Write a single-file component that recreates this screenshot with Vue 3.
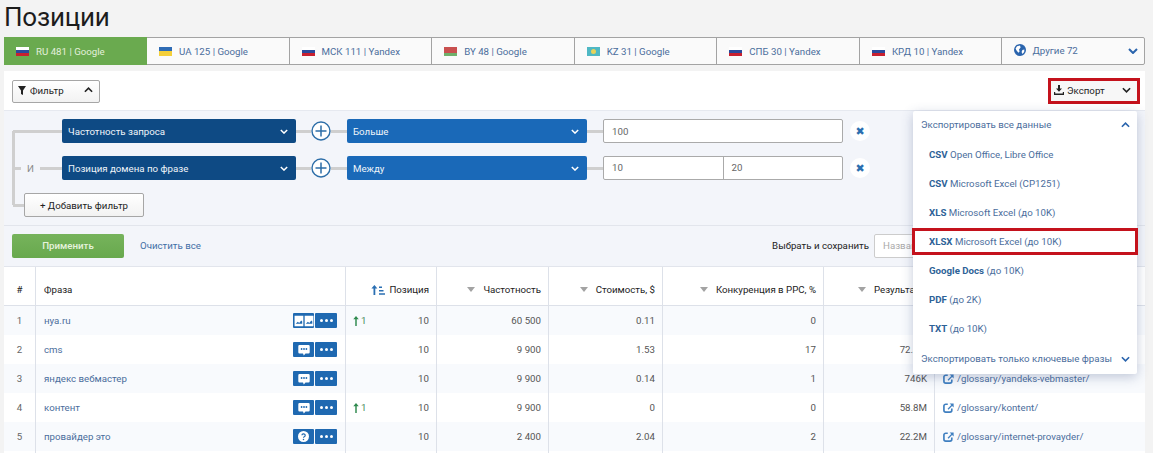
<script setup>
const tabs = [
  { label: 'RU 481 | Google', flag: ['#fff', '#2b4a9b', '#c8202f'], active: true },
  { label: 'UA 125 | Google', flag: ['#2f6cb5', '#f4cf3a'] },
  { label: 'МСК 111 | Yandex', flag: ['#fff', '#2b4a9b', '#c8202f'] },
  { label: 'BY 48 | Google', flag: ['#c9504f', '#c9504f', '#6fb06b'] },
  { label: 'KZ 31 | Google', flag: ['#4fb8c4'], sun: true },
  { label: 'СПБ 30 | Yandex', flag: ['#fff', '#2b4a9b', '#c8202f'] },
  { label: 'КРД 10 | Yandex', flag: ['#fff', '#2b4a9b', '#c8202f'] }
]
const columns = [
  { label: '#', cls: 'center' },
  { label: 'Фраза', cls: 'left' },
  { label: 'Позиция', sort: true },
  { label: 'Частотность', caret: true },
  { label: 'Стоимость, $', caret: true },
  { label: 'Конкуренция в PPC, %', caret: true },
  { label: 'Результаты', caret: true },
  { label: '', cls: 'left' }
]
const rows = [
  { n: 1, phrase: 'нуа.ru', icon: 'images', up: true, freq: '60 500', cost: '0.11', comp: '0', res: '14', url: '/' },
  { n: 2, phrase: 'cms', icon: 'chat', up: false, freq: '9 900', cost: '1.53', comp: '17', res: '72.4M', url: '/glossary/cms/' },
  { n: 3, phrase: 'яндекс вебмастер', icon: 'chat', up: false, freq: '9 900', cost: '0.14', comp: '1', res: '746K', url: '/glossary/yandeks-vebmaster/' },
  { n: 4, phrase: 'контент', icon: 'chat', up: true, freq: '9 900', cost: '0', comp: '0', res: '58.8M', url: '/glossary/kontent/' },
  { n: 5, phrase: 'провайдер это', icon: 'help', up: false, freq: '2 400', cost: '2.04', comp: '2', res: '22.2M', url: '/glossary/internet-provayder/' }
]
const exports_ = [
  { b: 'CSV', t: 'Open Office, Libre Office' },
  { b: 'CSV', t: 'Microsoft Excel (CP1251)' },
  { b: 'XLS', t: 'Microsoft Excel (до 10K)' },
  { b: 'XLSX', t: 'Microsoft Excel (до 10K)', mark: true },
  { b: 'Google Docs', t: '(до 10K)' },
  { b: 'PDF', t: '(до 2K)' },
  { b: 'TXT', t: '(до 10K)' }
]
</script>

<template>
  <div class="page">
    <h1 class="title">Позиции</h1>

    <nav class="tabs">
      <div v-for="tab in tabs" :key="tab.label" class="tab" :class="{ active: tab.active }">
        <span class="flag">
          <i v-for="(c, i) in tab.flag" :key="i" :style="{ background: c }"></i>
          <b v-if="tab.sun" class="sun"></b>
        </span>
        <span>{{ tab.label }}</span>
      </div>
      <div class="tab tab-more">
        <svg class="globe" viewBox="0 0 12 12" width="12" height="12">
          <circle cx="6" cy="6" r="6" fill="#2a64ad" />
          <path d="M3 2.2 6 1.6 6.6 3.6 5 5.4 5.6 7.6 4.4 8.8 2.4 6.2 1.6 4.4Z" fill="#fff" />
          <path d="M8.4 6 10.4 5.4 10.2 8 8.4 10 7.6 8Z" fill="#fff" />
        </svg>
        <span>Другие 72</span>
        <svg class="more-chev" viewBox="0 0 10 6" width="10" height="6">
          <path d="M1 1l4 4 4-4" fill="none" stroke="#2a64ad" stroke-width="2" />
        </svg>
      </div>
    </nav>

    <section class="card">
      <div class="toolbar">
        <button class="btn filter-btn">
          <svg viewBox="0 0 8 9" width="8" height="9"><path d="M0 0h8L5 4.500V9L3 8V4.500Z" fill="#222" /></svg>
          <span>Фильтр</span>
          <svg class="chev" viewBox="0 0 10 6" width="9" height="6"><path d="M1 5l4-4 4 4" fill="none" stroke="#222" stroke-width="1.8" /></svg>
        </button>
        <div class="export-box">
          <svg viewBox="0 0 10 10" width="10" height="10">
            <path d="M4 0h2v3.6h2L5 6.8 2 3.6h2Z M0 7h1.2v1.6h7.6V7H10v3H0Z" fill="#222" />
          </svg>
          <span>Экспорт</span>
          <svg class="chev" viewBox="0 0 10 6" width="9" height="6"><path d="M1 1l4 4 4-4" fill="none" stroke="#222" stroke-width="1.8" /></svg>
        </div>
      </div>

      <div class="filters">
        <span class="tree-line"></span>
        <div class="f-row">
          <span class="join"><i class="dash long"></i></span>
          <div class="select dark"><span>Частотность запроса</span><svg viewBox="0 0 10 6" width="8" height="5"><path d="M1 1l4 4 4-4" fill="none" stroke="#fff" stroke-width="1.8" /></svg></div>
          <i class="dash s15"></i>
          <svg class="plus" viewBox="0 0 20 20" width="20" height="20"><circle cx="10" cy="10" r="9" fill="#fff" stroke="#2d6ea8" stroke-width="1.4" /><path d="M10 4.500v11M4.500 10h11" stroke="#2d6ea8" stroke-width="1.5" /></svg>
          <i class="dash s16"></i>
          <div class="select blue"><span>Больше</span><svg viewBox="0 0 10 6" width="8" height="5"><path d="M1 1l4 4 4-4" fill="none" stroke="#fff" stroke-width="1.8" /></svg></div>
          <i class="dash s16"></i>
          <div class="input"><span>100</span></div>
          <span class="remove">✖</span>
        </div>
        <div class="f-row">
          <span class="join"><i class="dash d1"></i><span class="and">И</span><i class="dash d2"></i></span>
          <div class="select dark"><span>Позиция домена по фразе</span><svg viewBox="0 0 10 6" width="8" height="5"><path d="M1 1l4 4 4-4" fill="none" stroke="#fff" stroke-width="1.8" /></svg></div>
          <i class="dash s15"></i>
          <svg class="plus" viewBox="0 0 20 20" width="20" height="20"><circle cx="10" cy="10" r="9" fill="#fff" stroke="#2d6ea8" stroke-width="1.4" /><path d="M10 4.500v11M4.500 10h11" stroke="#2d6ea8" stroke-width="1.5" /></svg>
          <i class="dash s16"></i>
          <div class="select blue"><span>Между</span><svg viewBox="0 0 10 6" width="8" height="5"><path d="M1 1l4 4 4-4" fill="none" stroke="#fff" stroke-width="1.8" /></svg></div>
          <i class="dash s16"></i>
          <div class="input split"><span>10</span><span>20</span></div>
          <span class="remove">✖</span>
        </div>
        <div class="f-row add-row">
          <i class="dash s11"></i>
          <button class="btn add-btn">+ Добавить фильтр</button>
        </div>
      </div>

      <div class="apply">
        <button class="apply-btn">Применить</button>
        <a class="clear">Очистить все</a>
        <span class="save-label">Выбрать и сохранить</span>
        <div class="save-input">Название</div>
      </div>

      <div class="table">
        <div class="row head">
          <div v-for="c in columns" :key="c.label" class="cell" :class="c.cls">
            <svg v-if="c.sort" class="sort" viewBox="0 0 14 10" width="14" height="10">
              <path d="M2.500 10V3.400H.4L3.400 0l3 3.400H4.300V10Z" fill="#2a6fb3" />
              <path d="M8 1.600h3v1.500H8zM8 5h4.500v1.500H8zM8 8.300h6v1.500H8z" fill="#2a6fb3" />
            </svg>
            <span v-if="c.caret" class="caret"></span>
            <span>{{ c.label }}</span>
          </div>
        </div>
        <div v-for="r in rows" :key="r.n" class="row body">
          <div class="cell center num">{{ r.n }}</div>
          <div class="cell left phrase">
            <a>{{ r.phrase }}</a>
            <span class="actions">
              <span class="act">
                <svg v-if="r.icon === 'images'" viewBox="0 0 21 12" width="20" height="12">
                  <path d="M.6.6h9.200v10.800H.6ZM11.200.6h9.200v10.800h-9.200Z" fill="#fff" />
                  <path d="M1.800 8.800 4 6.800l1.400 1.200L7.600 5.400l1 1v2.400ZM12.400 8.800l2.200-2 1.400 1.200 2.200-2.600 1 1v2.400Z" fill="#1f69b1" />
                </svg>
                <svg v-else-if="r.icon === 'chat'" viewBox="0 0 12 12" width="12" height="12">
                  <path d="M1.500 1h9A1.200 1.200 0 0 1 11.700 2.200v6A1.200 1.200 0 0 1 10.500 9.400H7.500L5.800 11.500 5 9.400H1.500A1.200 1.200 0 0 1 .3 8.200v-6A1.200 1.200 0 0 1 1.500 1Z" fill="#fff" />
                  <circle cx="3.600" cy="5" r=".9" fill="#1f69b1" /><circle cx="6" cy="5" r=".9" fill="#1f69b1" /><circle cx="8.400" cy="5" r=".9" fill="#1f69b1" />
                </svg>
                <svg v-else viewBox="0 0 12 12" width="11" height="11">
                  <circle cx="6" cy="6" r="6" fill="#fff" />
                  <path d="M4.300 4.700A1.800 1.600 0 1 1 6.800 6.200C6.200 6.500 6 6.800 6 7.400" fill="none" stroke="#1f69b1" stroke-width="1.300" />
                  <circle cx="6" cy="9.200" r=".85" fill="#1f69b1" />
                </svg>
              </span>
              <span class="act dots"><i></i><i></i><i></i></span>
            </span>
          </div>
          <div class="cell pos">
            <span v-if="r.up" class="up">
              <svg viewBox="0 0 6 11" width="6" height="10"><path d="M3 0l3 3.600H3.800V11H2.200V3.600H0Z" fill="#2f8a4e" /></svg>1
            </span>
            <span class="pos-val">10</span>
          </div>
          <div class="cell">{{ r.freq }}</div>
          <div class="cell">{{ r.cost }}</div>
          <div class="cell">{{ r.comp }}</div>
          <div class="cell">{{ r.res }}</div>
          <div class="cell left url">
            <svg viewBox="0 0 12 12" width="11" height="11">
              <path d="M5.200 2.400H3A2 2 0 0 0 1 4.400V9a2 2 0 0 0 2 2h4.600a2 2 0 0 0 2-2V7" fill="none" stroke="#3f7fc0" stroke-width="1.800" />
              <path d="M5 7.400 9 3.400 7.200 1.600H11.600V6L9.900 4.300 6 8.400Z" fill="#3f7fc0" />
            </svg>
            <a>{{ r.url }}</a>
          </div>
        </div>
        <div class="row tail">
          <div v-for="i in 8" :key="i" class="cell"></div>
        </div>
      </div>

      <aside class="dropdown">
        <div class="dd-head first">
          <span>Экспортировать все данные</span>
          <svg viewBox="0 0 10 6" width="9" height="6"><path d="M1 5l4-4 4 4" fill="none" stroke="#2a64ad" stroke-width="1.800" /></svg>
        </div>
        <div v-for="e in exports_" :key="e.b + e.t" class="dd-item" :class="{ mark: e.mark }">
          <b>{{ e.b }}</b> {{ e.t }}
        </div>
        <div class="dd-head last">
          <span>Экспортировать только ключевые фразы</span>
          <svg viewBox="0 0 10 6" width="9" height="6"><path d="M1 1l4 4 4-4" fill="none" stroke="#2a64ad" stroke-width="1.800" /></svg>
        </div>
      </aside>
    </section>
  </div>
</template>

<style scoped>
.page {
  height: 453px;
  overflow: hidden;
  padding: 0 8px 0 4px;
  box-sizing: border-box;
  font-family: Roboto, "Liberation Sans", sans-serif;
  font-size: 9.7px;
  color: #555;
}
.title {
  margin: 0;
  height: 37px;
  font-size: 26px;
  letter-spacing: -0.2px;
  line-height: 34px;
  font-weight: 400;
  color: #1c1c1c;
}
.tabs {
  display: flex;
  height: 28px;
  box-sizing: border-box;
  border: 1px solid #a3a3a3;
  border-radius: 2px;
  background: #fafafa;
}
.tab {
  flex: 1 1 0;
  display: flex;
  align-items: center;
  gap: 7px;
  padding-left: 12px;
  border-right: 1px solid #a3a3a3;
  color: #4a6d9c;
}
.tab.active {
  flex: none;
  box-sizing: border-box;
  width: 143px;
  margin: -1px 0 -1px -1px;
  background: #6aaa4f;
  color: #e4f0dc;
  border-right: 0;
}
.flag {
  position: relative;
  display: flex;
  flex-direction: column;
  width: 13px;
  height: 9px;
  overflow: hidden;
}
.flag i { flex: 1; }
.sun {
  position: absolute;
  left: 4px;
  top: 2px;
  width: 5px;
  height: 5px;
  border-radius: 50%;
  background: #e6d35a;
}
.tab-more { position: relative; border-right: 0; gap: 6px; padding-bottom: 2px; }
.more-chev { position: absolute; right: 6px; top: 10px; }
.card {
  position: relative;
  margin-top: 6px;
  background: #fff;
  height: 382px;
}
.toolbar {
  display: flex;
  align-items: center;
  justify-content: space-between;
  height: 39px;
  padding: 0 5px 0 8px;
  box-sizing: border-box;
}
.btn {
  font: inherit;
  color: #222;
  background: linear-gradient(#fff, #f2f2f2);
  border: 1px solid #a6a6a6;
  border-radius: 2px;
  padding: 0;
}
.filter-btn {
  display: flex;
  align-items: center;
  gap: 4px;
  width: 88px;
  height: 23px;
  margin-top: 1px;
  padding: 0 0 2px 5px;
  box-sizing: border-box;
}
.filter-btn .chev { margin-left: auto; margin-right: 6px; }
.export-box {
  display: flex;
  align-items: center;
  gap: 3px;
  width: 92px;
  height: 26px;
  box-sizing: border-box;
  border: 3px solid #c4121c;
  background: #f7f7f7;
  padding: 0 0 1px 3px;
  color: #222;
}
.export-box .chev { margin-left: auto; margin-right: 6px; }
.filters {
  position: relative;
  display: flex;
  flex-direction: column;
  gap: 13px;
  height: 116px;
  padding-top: 8px;
  box-sizing: border-box;
  background: #f3f5fa;
  border-top: 1px solid #e6e9f0;
  border-bottom: 1px solid #e2e5ec;
}
.tree-line {
  position: absolute;
  left: 8px;
  top: 20px;
  width: 3px;
  height: 74px;
  background: #cfcfcf;
}
.f-row { display: flex; align-items: center; height: 24px; }
.join { display: flex; align-items: center; width: 58px; flex: none; position: relative; height: 100%; }
.dash { display: block; height: 3px; background: #cfcfcf; flex: none; }
.dash.long { width: 49px; margin-left: 9px; }
.dash.d1 { width: 6px; margin-left: 11px; }
.and { width: 19px; text-align: center; color: #8a8a8a; flex: none; }
.dash.d2 { width: 22px; }
.dash.s15 { width: 15px; }
.dash.s16 { width: 16px; }
.dash.s11 { width: 11px; margin-left: 9px; }
.select {
  display: flex;
  align-items: center;
  justify-content: space-between;
  height: 24px;
  box-sizing: border-box;
  padding: 0 8px 0 6px;
  border-radius: 2px;
  color: #f0f5fa;
  flex: none;
}
.select.dark { width: 234px; background: #0e4a84; }
.select.blue { width: 240px; background: #1a69b8; }
.plus { flex: none; }
.input {
  display: flex;
  align-items: center;
  width: 240px;
  height: 24px;
  box-sizing: border-box;
  border: 1px solid #aaa;
  border-radius: 2px;
  background: #fff;
  flex: none;
  color: #666;
}
.input span { padding-left: 8px; }
.input.split span { flex: 1; height: 100%; line-height: 22px; }
.input.split span + span { border-left: 1px solid #aaa; }
.remove {
  display: flex;
  align-items: center;
  justify-content: center;
  width: 20px;
  height: 20px;
  margin-left: 7px;
  border-radius: 50%;
  background: #fff;
  color: #2a6fb0;
  font-family: "DejaVu Sans", sans-serif;
  font-size: 11px;
}
.add-row { height: 24px; }
.add-btn { width: 120px; height: 24px; box-sizing: border-box; }
.apply {
  display: flex;
  align-items: center;
  height: 41px;
  padding: 0 8px 1px;
  box-sizing: border-box;
  background: #f3f5fa;
  border-bottom: 1px solid #e2e5ec;
}
.apply-btn {
  width: 112px;
  height: 24px;
  border: 0;
  border-radius: 2px;
  background: linear-gradient(#76b35c, #68a94d);
  color: #e6f3dd;
  font: inherit;
  font-weight: 500;
}
.clear { margin-left: 16px; color: #3f6ea6; }
.save-label { margin-left: auto; color: #222; }
.save-input {
  width: 263px;
  height: 24px;
  line-height: 22px;
  margin-left: 5px;
  padding-left: 8px;
  box-sizing: border-box;
  border: 1px solid #ccc;
  border-radius: 2px;
  background: #fff;
  color: #aaa;
}
.table { display: flex; flex-direction: column; }
.row {
  display: grid;
  grid-template-columns: 32px 310px 91px 112px 114px 161px 111px 1fr;
}
.head { height: 39px; border-bottom: 1px solid #dde1e9; box-sizing: border-box; color: #222; }
.body { height: 29px; }
.body:nth-child(even) { background: #f8fafd; }
.tail { height: 10px; }
.cell {
  display: flex;
  align-items: center;
  justify-content: flex-end;
  padding: 0 7px;
  border-right: 1px solid #dde1e9;
  min-width: 0;
  white-space: nowrap;
}
.cell:last-child { border-right: 0; }
.cell.left { justify-content: flex-start; padding: 0 8px; }
.cell.center { justify-content: center; padding: 0; }
.head .cell { padding-top: 7px; }
.head .left { padding-left: 8px; }
.sort { margin-right: 4px; }
.caret {
  width: 0;
  height: 0;
  margin-right: 8px;
  border: 4.500px solid transparent;
  border-top: 5px solid #a3a3a3;
  border-bottom: 0;
}
.num { color: #666; }
.phrase { justify-content: space-between !important; padding-right: 8px !important; }
a { color: #4a6d9c; }
.actions { display: flex; gap: 1px; }
.act {
  display: flex;
  align-items: center;
  justify-content: center;
  width: 21px;
  height: 15px;
  background: #1f69b1;
  border-radius: 1px;
}
.dots { width: 22px; gap: 2px; }
.dots i { width: 3px; height: 3px; border-radius: 50%; background: #fff; }
.pos { justify-content: space-between; }
.up { display: flex; align-items: center; gap: 2px; color: #4a8a5e; }
.pos-val { margin-left: auto; }
.url { gap: 3px; padding-left: 8px !important; }
.dropdown {
  position: absolute;
  left: 909px;
  top: 40px;
  width: 224px;
  height: 263px;
  background: #fff;
  border-radius: 2px;
  box-shadow: 0 3px 12px rgba(60, 80, 130, .3);
  color: #4a6d9c;
}
.dd-head {
  display: flex;
  align-items: center;
  justify-content: space-between;
  height: 29px;
  padding: 0 7px 0 8px;
  box-sizing: border-box;
}
.dd-head.first { padding-bottom: 2px; }
.dd-head.last { margin-top: 1px; }
.dd-item {
  position: relative;
  height: 29px;
  line-height: 29px;
  padding-left: 16px;
}
.dd-item b { color: #2d6297; font-weight: 700; }
.dd-item.mark::after {
  content: "";
  position: absolute;
  left: -1px;
  right: -1px;
  top: 1px;
  height: 27px;
  box-sizing: border-box;
  border: 3px solid #c4121c;
}
</style>

<style>
html, body { margin: 0; background: #f3f3f3; overflow: hidden; }
</style>
